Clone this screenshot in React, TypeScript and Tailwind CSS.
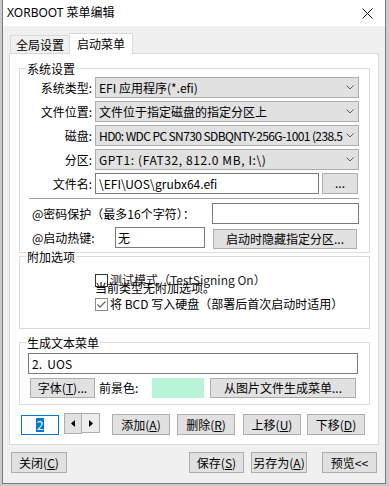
import React from "react";

function Btn({ children, className = "" }: { children: React.ReactNode; className?: string }) {
  return (
    <div
      className={`flex shrink-0 items-center justify-center border border-[#adadad] bg-[#e1e1e1] text-[12px] leading-none whitespace-nowrap text-black ${className}`}
    >
      {children}
    </div>
  );
}

function Chevron() {
  return (
    <svg width="8" height="5" viewBox="0 0 8 5" className="shrink-0">
      <polyline points="0.5,0.5 4,4 7.5,0.5" fill="none" stroke="#606060" strokeWidth="1" />
    </svg>
  );
}

function Combo({ text, className = "" }: { text: string; className?: string }) {
  return (
    <div className="ml-[3px] flex h-[21px] w-[264px] shrink-0 items-center border border-[#adadad] bg-[#e1e1e1] pr-[4px] pl-[3px]">
      <div className="min-w-0 flex-1 overflow-hidden">
        <span className={`leading-[16px] whitespace-nowrap ${className}`}>{text}</span>
      </div>
      <span className="ml-[3px]">
        <Chevron />
      </span>
    </div>
  );
}

function Row({ label, children }: { label: string; children: React.ReactNode }) {
  return (
    <div className="flex h-[21px] items-center">
      <div className="w-[72px] shrink-0 text-right whitespace-nowrap">{label}</div>
      {children}
    </div>
  );
}

function Box({ checked = false }: { checked?: boolean }) {
  return (
    <div
      className={`mr-[2px] flex h-[13px] w-[13px] shrink-0 items-center justify-center border bg-white ${
        checked ? "border-[#8c8c8c]" : "border-[#333333]"
      }`}
    >
      {checked && (
        <svg width="11" height="11" viewBox="0 0 11 11">
          <polyline points="1.5,5.5 4,8 9.5,2.5" fill="none" stroke="#6d6d6d" strokeWidth="1.3" />
        </svg>
      )}
    </div>
  );
}

function Legend({ text }: { text: string }) {
  return <div className="-mt-[7px] ml-[6px] w-fit bg-white px-[1px] leading-[14px]">{text}</div>;
}

export default function App() {
  return (
    <div className="h-[486px] w-[389px] overflow-hidden bg-[#c9cbce] font-['Noto_Sans_CJK_SC',sans-serif] text-[12px] leading-[14px] text-black">
      <div className="ml-[2px] flex h-[484px] w-[384px] flex-col border-x border-b border-[#7b7b7b] bg-[#f0f0f0]">
        {/* title bar */}
        <div className="flex h-[26px] shrink-0 items-center bg-white pl-[4px]">
          <span className="flex-1 font-['Noto_Sans','Noto_Sans_CJK_SC',sans-serif] text-[12px]">XORBOOT 菜单编辑</span>
          <svg width="11" height="11" viewBox="0 0 11 11" className="mr-[12px]">
            <path d="M0.5 0.5 L10.5 10.5 M10.5 0.5 L0.5 10.5" stroke="#111" strokeWidth="1" />
          </svg>
        </div>

        <div className="flex flex-col px-[6px] pt-[7px]">
          {/* tabs */}
          <div className="flex items-end pl-[1px]">
            <div className="flex h-[18px] w-[59px] items-center justify-center border-t border-l border-[#d9d9d9] bg-[#f0f0f0]">
              全局设置
            </div>
            <div className="relative z-10 -mb-px flex h-[21px] w-[64px] items-center justify-center border-x border-t border-[#d9d9d9] bg-white pb-[1px]">
              启动菜单
            </div>
          </div>

          {/* panel */}
          <div className="flex h-[392px] flex-col border border-[#d9d9d9] bg-white pl-[9px]">
            {/* 系统设置 */}
            <div className="mt-[14px] flex w-[351px] flex-col border border-[#dcdcdc] pb-[3px]">
              <Legend text="系统设置" />
              <div className="mt-[1px] flex flex-col gap-[3px]">
                <Row label="系统类型:">
                  <Combo text="EFI 应用程序(*.efi)" />
                </Row>
                <Row label="文件位置:">
                  <Combo text="文件位于指定磁盘的指定分区上" />
                </Row>
                <Row label="磁盘:">
                  <Combo text="HD0: WDC PC SN730 SDBQNTY-256G-1001 (238.5 GB)" className="tracking-[-0.6px]" />
                </Row>
                <Row label="分区:">
                  <Combo text="GPT1: (FAT32, 812.0 MB, I:\)" className="tracking-[0.6px]" />
                </Row>
                <Row label="文件名:">
                  <div className="ml-[3px] flex h-[21px] w-[224px] shrink-0 items-center border border-[#7a7a7a] bg-white pl-[3px] whitespace-nowrap">
                    \EFI\UOS\grubx64.efi
                  </div>
                  <Btn className="ml-[3px] h-[21px] w-[36px] pb-[2px]">...</Btn>
                </Row>
              </div>
              <div className="mt-[4px] ml-[9px] w-[330px] border-t border-[#a0a0a0]" />
              <div className="mt-[4px] flex h-[21px] items-center">
                <div className="flex-1 pl-[12px] whitespace-nowrap">@密码保护（最多16个字符）：</div>
                <div className="mr-[10px] h-[21px] w-[147px] border border-[#7a7a7a] bg-white" />
              </div>
              <div className="mt-[3px] flex items-start">
                <div className="flex h-[21px] w-[95px] shrink-0 items-center pl-[12px] whitespace-nowrap">@启动热键:</div>
                <div className="flex h-[21px] w-[90px] shrink-0 items-center border border-[#7a7a7a] bg-white pl-[2px]">无</div>
                <Btn className="mt-[2px] ml-[8px] h-[20px] w-[144px]">启动时隐藏指定分区...</Btn>
              </div>
            </div>

            {/* 附加选项 */}
            <div className="mt-[3px] flex w-[351px] flex-col border border-[#dcdcdc] pb-[17px]">
              <Legend text="附加选项" />
              <div className="mt-[9px] flex h-[14px] items-center pl-[75px] whitespace-nowrap">
                <Box />
                <span className="text-[#222]">测试模式（TestSigning On）</span>
              </div>
              <div className="relative -mt-[6px] h-[14px] pl-[75px] whitespace-nowrap">当前类型无附加选项。</div>
              <div className="mt-[2px] flex h-[14px] items-center pl-[75px] whitespace-nowrap">
                <Box checked />
                <span>将 BCD 写入硬盘（部署后首次启动时适用）</span>
              </div>
            </div>

            {/* 生成文本菜单 */}
            <div className="mt-[13px] flex w-[351px] flex-col border border-[#dcdcdc] pb-[6px]">
              <Legend text="生成文本菜单" />
              <div className="mt-[3px] ml-[8px] flex h-[21px] w-[330px] items-center border border-[#7a7a7a] bg-white pl-[3px]">
                2.&nbsp;&nbsp;UOS
              </div>
              <div className="mt-[4px] flex h-[20px] items-center">
                <Btn className="ml-[10px] h-[20px] w-[65px]">
                  字体(<u>T</u>)...
                </Btn>
                <div className="ml-[4px] w-[53px] shrink-0 whitespace-nowrap">前景色:</div>
                <div className="h-[20px] w-[52px] shrink-0 bg-[#b8f4d8]" />
                <Btn className="ml-[6px] h-[20px] w-[146px]">从图片文件生成菜单...</Btn>
              </div>
            </div>

            {/* spin row */}
            <div className="mt-[8px] flex items-start">
              <div className="mt-[2px] ml-[2px] flex h-[20px] w-[38px] shrink-0 items-center justify-center border border-[#0078d7] bg-white">
                <span className="bg-[#0078d7] px-[1px] leading-[14px] text-white">2</span>
              </div>
              <div className="ml-[5px] flex">
                <Btn className="h-[21px] w-[18px]">
                  <svg width="4" height="7" viewBox="0 0 4 7">
                    <polygon points="4,0 0,3.5 4,7" fill="#000" />
                  </svg>
                </Btn>
                <Btn className="-ml-px h-[20px] w-[19px] bg-[#ececec]">
                  <svg width="4" height="7" viewBox="0 0 4 7">
                    <polygon points="0,0 4,3.5 0,7" fill="#000" />
                  </svg>
                </Btn>
              </div>
              <Btn className="mt-[1px] ml-[12px] h-[21px] w-[58px]">
                添加(<u>A</u>)
              </Btn>
              <Btn className="mt-[1px] ml-[7px] h-[21px] w-[58px]">
                删除(<u>R</u>)
              </Btn>
              <Btn className="mt-[1px] ml-[8px] h-[21px] w-[58px]">
                上移(<u>U</u>)
              </Btn>
              <Btn className="mt-[1px] ml-[6px] h-[21px] w-[58px]">
                下移(<u>D</u>)
              </Btn>
            </div>
          </div>

          {/* bottom buttons */}
          <div className="mt-[7px] flex px-[2px]">
            <Btn className="h-[21px] w-[56px]">
              关闭(<u>C</u>)
            </Btn>
            <div className="flex-1" />
            <Btn className="h-[21px] w-[55px]">
              保存(<u>S</u>)
            </Btn>
            <Btn className="ml-[7px] h-[21px] w-[56px]">
              另存为(<u>A</u>)
            </Btn>
            <Btn className="ml-[15px] h-[21px] w-[55px]">预览&lt;&lt;</Btn>
          </div>
        </div>
      </div>
    </div>
  );
}
